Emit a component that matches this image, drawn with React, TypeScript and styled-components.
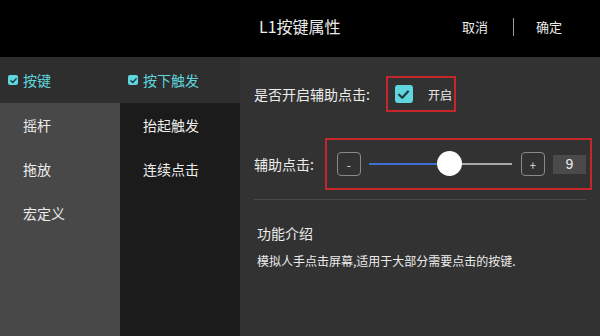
import React from 'react'
import styled, { createGlobalStyle } from 'styled-components'

const COLORS = {
    black: '#000000',
    panel: '#323232',
    tabHead: '#2e2e2e',
    typeCol: '#484848',
    modeCol: '#1b1b1b',
    text: '#ececec',
    cyan: '#5fd6de',
    red: '#c4262b',
    line: '#4a4a4a',
}

const GlobalStyle = createGlobalStyle`
  html, body {
    margin: 0;
    padding: 0;
    background: ${COLORS.panel};
  }
  body {
    font-family: "Noto Sans CJK SC", "Noto Sans", sans-serif;
    color: ${COLORS.text};
  }
`

const Screen = styled.div`
  width: 600px;
  height: 336px;
  display: grid;
  grid-template-rows: 57px 1fr;
  overflow: hidden;
`

const Header = styled.div`
  background: ${COLORS.black};
  position: relative;
  display: flex;
  align-items: center;
  justify-content: flex-end;
  padding-right: 40px;
`

const Title = styled.div`
  position: absolute;
  left: 259px;
  top: 14px;
  font-size: 16px;
  line-height: 24px;
`

const HeaderAction = styled.div`
  font-size: 13px;
  line-height: 20px;
  margin-top: -3px;
`

const HeaderDivider = styled.div`
  width: 1px;
  height: 18px;
  background: #9a9a9a;
  margin: -3px 22px 0 25px;
`

const Body = styled.div`
  display: grid;
  grid-template-columns: 120px 120px 1fr;
`

const Column = styled.div<{ $bg: string }>`
  display: flex;
  flex-direction: column;
  background: ${(p) => p.$bg};
`

const HeadCell = styled.div`
  height: 46px;
  background: ${COLORS.tabHead};
  display: flex;
  align-items: center;
  padding-left: 8px;
  gap: 5px;
  color: ${COLORS.cyan};
  font-size: 14px;
`

const SmallCheck = styled.span`
  width: 10px;
  height: 10px;
  border-radius: 2px;
  background: ${COLORS.cyan};
  display: flex;
  align-items: center;
  justify-content: center;
`

const ListItem = styled.div`
  height: 45px;
  display: flex;
  align-items: center;
  padding-left: 23px;
  font-size: 14px;
  margin-top: -1px;
`

const Panel = styled.div`
  background: ${COLORS.panel};
  padding: 19px 10px 0 14px;
  display: flex;
  flex-direction: column;
`

const Row = styled.div<{ $mt?: number }>`
  display: flex;
  align-items: center;
  margin-top: ${(p) => p.$mt ?? 0}px;
`

const Label = styled.div`
  font-size: 14px;
  line-height: 20px;
  white-space: nowrap;
  flex-shrink: 0;
`

const RedBox = styled.div<{ $w: number; $h: number; $ml: number }>`
  width: ${(p) => p.$w}px;
  height: ${(p) => p.$h}px;
  margin-left: ${(p) => p.$ml}px;
  box-sizing: border-box;
  border: 2px solid ${COLORS.red};
  display: flex;
  align-items: center;
  flex-shrink: 0;
`

const BigCheck = styled.span`
  width: 18px;
  height: 18px;
  border-radius: 3px;
  background: ${COLORS.cyan};
  display: flex;
  align-items: center;
  justify-content: center;
  margin-left: 7px;
`

const OnText = styled.span`
  font-size: 12px;
  margin-left: 15px;
`

const StepButton = styled.div<{ $ml?: number }>`
  width: 22px;
  height: 22px;
  margin-left: ${(p) => p.$ml ?? 0}px;
  border: 1px solid #8a8a8a;
  border-radius: 4px;
  display: flex;
  align-items: center;
  justify-content: center;
  font-size: 12px;
  color: #dcdcdc;
  flex-shrink: 0;
`

const Track = styled.div`
  position: relative;
  width: 143px;
  height: 2px;
  background: #a9a9a9;
  margin: 0 9px 0 8px;
`

const Fill = styled.div`
  height: 2px;
  background: #3f6fd1;
`

const Thumb = styled.div`
  position: absolute;
  top: -12px;
  width: 25px;
  height: 25px;
  margin-left: -12px;
  border-radius: 50%;
  background: #ffffff;
`

const ValueBox = styled.div`
  width: 33px;
  height: 19px;
  margin-left: 8px;
  background: #4a4a4a;
  display: flex;
  align-items: center;
  justify-content: center;
  font-family: "Liberation Sans", Arial, sans-serif;
  font-size: 14px;
`

const Divider = styled.div`
  height: 1px;
  background: ${COLORS.line};
  margin: 9px 6px 0 0;
`

const SectionTitle = styled.div`
  font-size: 14px;
  line-height: 20px;
  margin: 23px 0 0 3px;
`

const Description = styled.div`
  font-size: 12px;
  line-height: 18px;
  margin: 9px 0 0 3px;
  white-space: nowrap;
`

const Tick = ({ size }: { size: number }) => (
    <svg width={size} height={size} viewBox="0 0 12 12">
        <path d="M2.5 6.2 L5 8.6 L9.6 3.6" fill="none" stroke="#1f3b44" strokeWidth="1.8" strokeLinecap="round" strokeLinejoin="round" />
    </svg>
)

const App: React.FC = () => {
    const value = 9
    const percent = 56

    return (
        <Screen>
            <GlobalStyle />
            <Header>
                <Title>L1按键属性</Title>
                <HeaderAction>取消</HeaderAction>
                <HeaderDivider />
                <HeaderAction>确定</HeaderAction>
            </Header>
            <Body>
                <Column $bg={COLORS.typeCol}>
                    <HeadCell>
                        <SmallCheck><Tick size={9} /></SmallCheck>
                        按键
                    </HeadCell>
                    <ListItem>摇杆</ListItem>
                    <ListItem>拖放</ListItem>
                    <ListItem>宏定义</ListItem>
                </Column>
                <Column $bg={COLORS.modeCol}>
                    <HeadCell>
                        <SmallCheck><Tick size={9} /></SmallCheck>
                        按下触发
                    </HeadCell>
                    <ListItem>抬起触发</ListItem>
                    <ListItem>连续点击</ListItem>
                </Column>
                <Panel>
                    <Row>
                        <Label>是否开启辅助点击:</Label>
                        <RedBox $w={70} $h={36} $ml={16}>
                            <BigCheck><Tick size={15} /></BigCheck>
                            <OnText>开启</OnText>
                        </RedBox>
                    </Row>
                    <Row $mt={26}>
                        <Label>辅助点击:</Label>
                        <RedBox $w={267} $h={52} $ml={11}>
                            <StepButton $ml={10}>-</StepButton>
                            <Track>
                                <Fill style={{ width: `${percent}%` }} />
                                <Thumb style={{ left: `${percent}%` }} />
                            </Track>
                            <StepButton>+</StepButton>
                            <ValueBox>{value}</ValueBox>
                        </RedBox>
                    </Row>
                    <Divider />
                    <SectionTitle>功能介绍</SectionTitle>
                    <Description>模拟人手点击屏幕,适用于大部分需要点击的按键.</Description>
                </Panel>
            </Body>
        </Screen>
    )
}

export default App
